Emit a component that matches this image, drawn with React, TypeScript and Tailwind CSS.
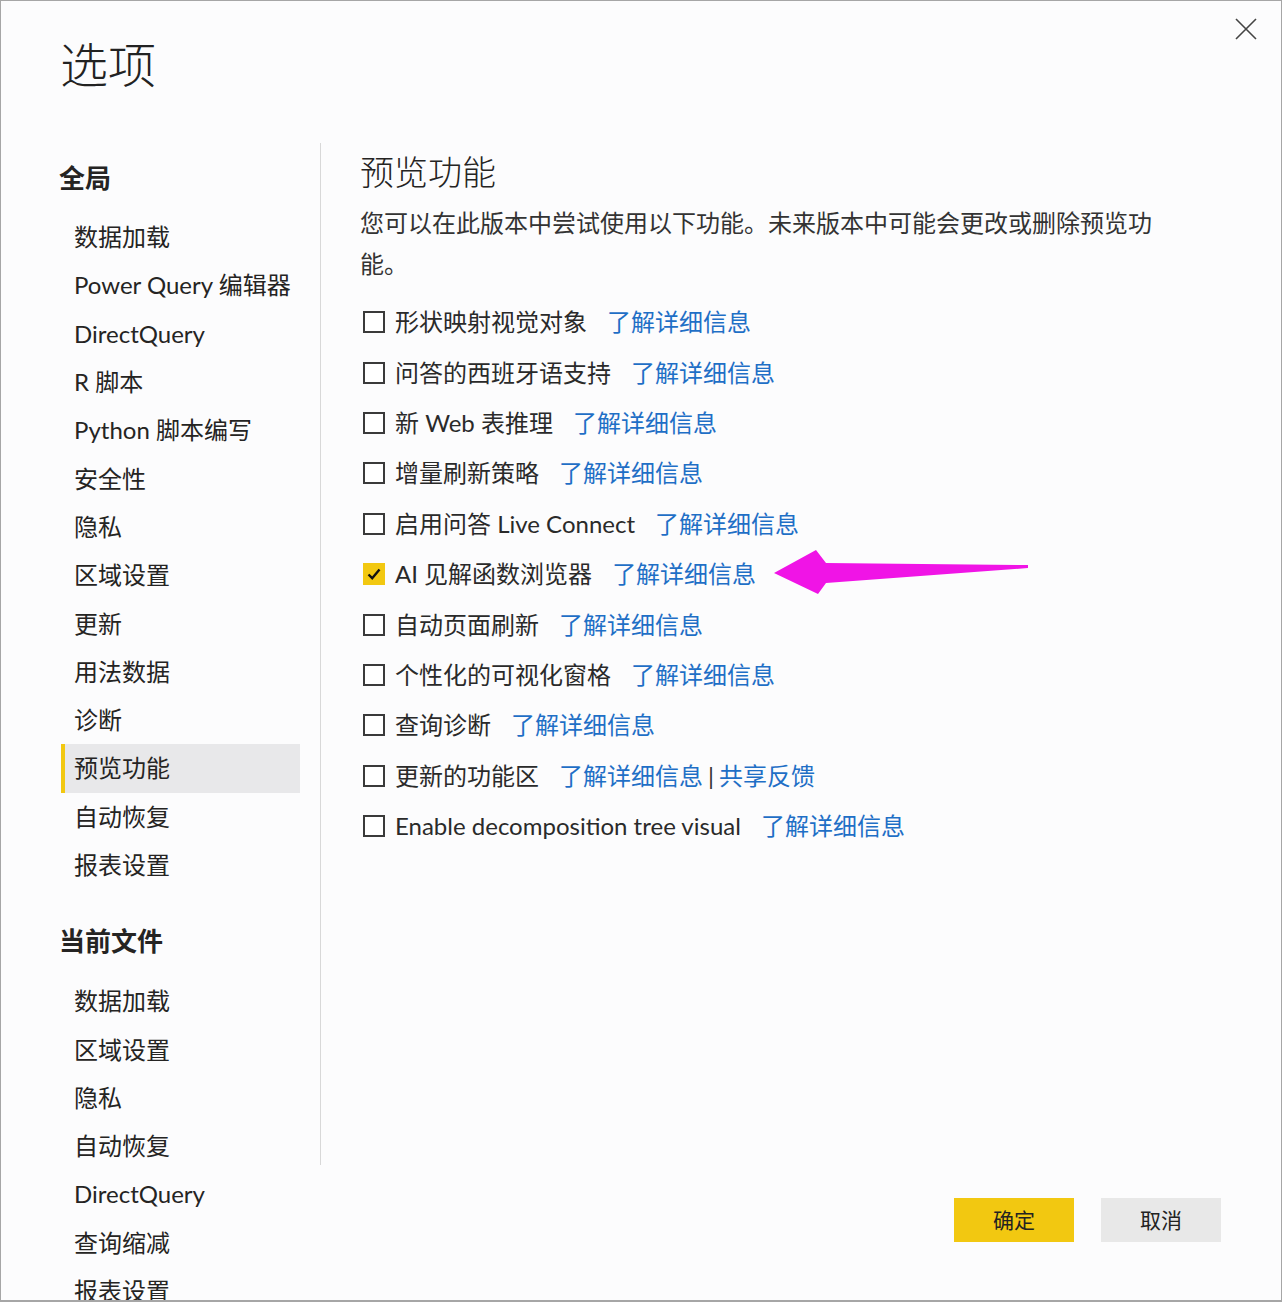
import { useState } from "react";

const FONT = { fontFamily: 'Lato, "Noto Sans CJK SC", sans-serif' };

const globalItems = [
  "数据加载",
  "Power Query 编辑器",
  "DirectQuery",
  "R 脚本",
  "Python 脚本编写",
  "安全性",
  "隐私",
  "区域设置",
  "更新",
  "用法数据",
  "诊断",
  "预览功能",
  "自动恢复",
  "报表设置",
];

const fileItems = ["数据加载", "区域设置", "隐私", "自动恢复", "DirectQuery", "查询缩减", "报表设置"];

const features = [
  { label: "形状映射视觉对象" },
  { label: "问答的西班牙语支持" },
  { label: "新 Web 表推理" },
  { label: "增量刷新策略" },
  { label: "启用问答 Live Connect" },
  { label: "AI 见解函数浏览器", checked: true, arrow: true },
  { label: "自动页面刷新" },
  { label: "个性化的可视化窗格" },
  { label: "查询诊断" },
  { label: "更新的功能区", feedback: true },
  { label: "Enable decomposition tree visual" },
];

function Checkbox({ checked, onClick }: { checked?: boolean; onClick: () => void }) {
  if (checked) {
    return (
      <button onClick={onClick} className="w-[22px] h-[22px] bg-[#f2c811] flex items-center justify-center shrink-0">
        <svg width="16" height="16" viewBox="0 0 16 16">
          <path d="M2.5 8.5 L6.2 12.2 L13.5 3.5" fill="none" stroke="#111" strokeWidth="2.4" />
        </svg>
      </button>
    );
  }
  return <button onClick={onClick} className="w-[22px] h-[22px] border-2 border-[#3a3a3a] bg-white shrink-0" />;
}

// magenta pointer drawn over the page
function Arrow() {
  return (
    <svg className="absolute left-[414px] top-[-24px]" width="260" height="48" viewBox="0 0 260 48">
      <polygon points="0,23 42,0 52,13 254,15 254,18 52,33 44,44" fill="#f014e6" />
    </svg>
  );
}

export default function App() {
  const [checked, setChecked] = useState<Record<number, boolean>>({ 5: true });

  return (
    <div style={FONT} className="relative w-[1282px] h-[1302px] overflow-hidden bg-[#fcfcfd] border border-[#a6a6a6] border-b-2 text-[#252423] flex flex-col">
      <button className="absolute right-[22px] top-[15px] w-[26px] h-[26px] flex items-center justify-center">
        <svg width="24" height="24" viewBox="0 0 24 24">
          <path d="M2 2 L22 22 M22 2 L2 22" stroke="#444" strokeWidth="1.6" fill="none" />
        </svg>
      </button>

      <div className="pl-[59px] pt-[40px] h-[142px]">
        <h1 className="text-[48px] leading-none font-light text-[#222]">选项</h1>
      </div>

      <div className="flex flex-1">
        <div className="w-[320px] h-[1022px] self-start border-r border-[#d8d8d8] pl-[60px] pr-[20px]">
          <div className="h-12 mt-[11px] mb-[11px] -ml-[2px] flex items-center text-[26px] font-bold">全局</div>
          {globalItems.map((item) => (
            <div
              key={item}
              className={
                item === "预览功能"
                  ? "h-[48.3px] flex items-center pl-[9px] border-l-4 border-[#f2c811] bg-[#e8e8ea] text-[24px]"
                  : "h-[48.3px] flex items-center pl-[13px] text-[24px]"
              }
            >
              {item}
            </div>
          ))}
          <div className="h-12 mt-[28px] mb-[12px] -ml-[2px] flex items-center text-[26px] font-bold">当前文件</div>
          {fileItems.map((item) => (
            <div key={item + "f"} className="h-[48.3px] flex items-center pl-[13px] text-[24px]">
              {item}
            </div>
          ))}
        </div>

        <div className="flex-1 flex flex-col pl-[39px]">
          <h2 className="pt-[9px] h-[49px] leading-[40px] text-[34px] font-light">预览功能</h2>
          <p className="mt-[10px] w-[800px] text-[24px] leading-[41px] text-[#333]">
            您可以在此版本中尝试使用以下功能。未来版本中可能会更改或删除预览功能。
          </p>
          <div className="mt-[13px] flex flex-col">
            {features.map((f, i) => (
              <div key={f.label} className="relative h-[50.4px] flex items-center pl-[3px] text-[24px]">
                <Checkbox checked={checked[i]} onClick={() => setChecked({ ...checked, [i]: !checked[i] })} />
                <span className="ml-[10px] text-[#2a2a2a]">{f.label}</span>
                <a className="ml-5 text-[#1f6fc6]" href="#">
                  了解详细信息
                </a>
                {f.feedback && (
                  <>
                    <span className="mx-[5px] text-[#333]">|</span>
                    <a className="text-[#1f6fc6]" href="#">
                      共享反馈
                    </a>
                  </>
                )}
                {f.arrow && (
                  <div className="absolute left-0 top-1/2">
                    <Arrow />
                  </div>
                )}
              </div>
            ))}
          </div>

          <div className="mt-auto mb-[58px] mr-[60px] flex justify-end gap-[27px]">
            <button className="w-[120px] h-[44px] bg-[#f2c811] text-[21px] text-[#222]">确定</button>
            <button className="w-[120px] h-[44px] bg-[#e8e8e8] text-[21px] text-[#222]">取消</button>
          </div>
        </div>
      </div>
    </div>
  );
}
